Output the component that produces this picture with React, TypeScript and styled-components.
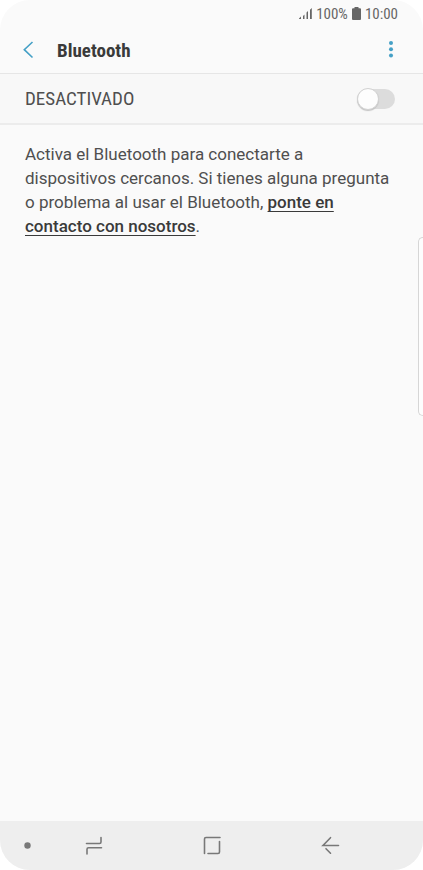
import React from "react";
import styled, { createGlobalStyle } from "styled-components";

const condensed = `"Roboto Condensed", Roboto, sans-serif`;

const Global = createGlobalStyle`
  *, *::before, *::after { box-sizing: border-box; }
  html, body, #root { height: 100%; }
  body { margin: 0; background: #fff; font-family: Roboto, sans-serif; }
`;

const Screen = styled.div`
  position: relative;
  display: flex;
  flex-direction: column;
  min-height: 100%;
  overflow: hidden;
  border-radius: 30px;
  background: #fafafa;
  color: #4f4f4f;
`;

const StatusBar = styled.div`
  display: flex;
  justify-content: flex-end;
  align-items: center;
  gap: 4px;
  height: 27px;
  padding: 0 25px;
  font-family: ${condensed};
  font-size: 15px;
  color: #666;
`;

const Header = styled.header`
  display: flex;
  align-items: center;
  height: 47px;
  padding: 0 20px 0 16px;
  border-bottom: 1px solid #e6e6e6;
`;

const IconButton = styled.button`
  display: flex;
  padding: 0;
  border: 0;
  background: none;
  color: #45a0c6;
  cursor: pointer;
`;

const Title = styled.h1`
  flex: 1;
  margin: 0 0 0 17px;
  font-family: ${condensed};
  font-size: 19px;
  font-weight: 700;
  color: #3a3a3a;
`;

const SwitchRow = styled.label`
  display: flex;
  align-items: center;
  justify-content: space-between;
  height: 51px;
  padding: 0 28px 0 25px;
  border-bottom: 2px solid #ececec;
  background: #f8f8f8;
  font-family: ${condensed};
  font-size: 19px;
`;

const Switch = styled.input`
  appearance: none;
  display: flex;
  align-items: center;
  width: 38px;
  height: 20px;
  margin: 0;
  border-radius: 10px;
  background: #dcdcdc;
  cursor: pointer;

  &::before {
    content: "";
    flex: none;
    width: 22px;
    height: 22px;
    border: 1px solid #d2d2d2;
    border-radius: 50%;
    background: #fdfdfd;
    box-shadow: 0 1px 1px #c4c4c4;
  }

  &:checked {
    justify-content: flex-end;
    background: #8cc4dc;
  }
`;

const Message = styled.p`
  flex: 1;
  margin: 0;
  padding: 17px 25px;
  font-size: 17px;
  line-height: 24px;
`;

const Link = styled.a`
  color: #3a3a3a;
  font-weight: 500;
  text-underline-offset: 3px;
  text-decoration-thickness: 1px;
`;

const EdgeHandle = styled.div`
  position: absolute;
  top: 237px;
  right: 0;
  width: 5px;
  height: 179px;
  border: 1px solid #d6d6d6;
  border-right: 0;
  border-radius: 5px 0 0 5px;
  background: #fdfdfd;
`;

const NavBar = styled.nav`
  display: grid;
  grid-template-columns: 35px repeat(3, 1fr);
  height: 49px;
  padding-right: 34px;
  background: #eee;
`;

const NavButton = styled.button<{ $inset?: number }>`
  display: flex;
  align-items: center;
  justify-content: center;
  padding: 0 0 0 ${(p) => p.$inset ?? 0}px;
  border: 0;
  background: none;
  color: #787878;
  cursor: pointer;
`;

const NavIcon = ({ d }: { d: string }) => (
  <svg width="24" height="25" viewBox="0 0 24 25" fill="none" stroke="currentColor" strokeWidth="1.6" strokeLinecap="round" aria-hidden="true">
    <path d={d} />
  </svg>
);

export default function App() {
  return (
    <>
      <Global />
      <Screen>
        <StatusBar>
          <svg width="13" height="13" viewBox="0 0 13 13" fill="currentColor" aria-hidden="true">
            <path d="M0 12h2V9.500L0 11.500zM4 12h1.500V7.500L4 9zM7.500 12H9V4L7.500 5.500zM11 12h1.800V1L11 2.800z" />
          </svg>
          <span>100%</span>
          <svg width="9" height="13" viewBox="0 0 9 13" fill="currentColor" aria-hidden="true">
            <path d="M2.5 0h4v1.2H8q1 0 1 1V12q0 1-1 1H1q-1 0-1-1V2.2q0-1 1-1h1.5z" />
          </svg>
          <span>10:00</span>
        </StatusBar>
        <Header>
          <IconButton aria-label="Atrás">
            <svg width="24" height="24" viewBox="0 0 24 24" fill="none" stroke="currentColor" strokeWidth="1.6" aria-hidden="true">
              <path d="M16.5 4 8.3 11.7l8.2 7.8" />
            </svg>
          </IconButton>
          <Title>Bluetooth</Title>
          <IconButton aria-label="Más opciones">
            <svg width="24" height="24" viewBox="0 0 24 24" fill="currentColor" aria-hidden="true">
              <circle cx="12" cy="5" r="2" />
              <circle cx="12" cy="11.2" r="2" />
              <circle cx="12" cy="17.4" r="2" />
            </svg>
          </IconButton>
        </Header>
        <SwitchRow>
          DESACTIVADO
          <Switch type="checkbox" role="switch" />
        </SwitchRow>
        <Message>
          Activa el Bluetooth para conectarte a dispositivos cercanos. Si tienes alguna pregunta o problema al usar el
          Bluetooth, <Link href="#contacto">ponte en contacto con nosotros</Link>.
        </Message>
        <EdgeHandle />
        <NavBar>
          <NavButton aria-label="Ocultar barra" $inset={19}>
            <svg width="7" height="7" viewBox="0 0 7 7" fill="currentColor" aria-hidden="true">
              <circle cx="3.5" cy="3.5" r="3.2" />
            </svg>
          </NavButton>
          <NavButton aria-label="Recientes">
            <NavIcon d="M4.5 10.5h13q1.5 0 1.5-1.5V4.5M5 21v-4.8q0-1.5 1.5-1.5h13" />
          </NavButton>
          <NavButton aria-label="Inicio">
            <NavIcon d="M4.5 20.5V6q0-1.5 1.5-1.5h14M19.5 8.5V19q0 1.5-1.5 1.5H8" />
          </NavButton>
          <NavButton aria-label="Volver">
            <NavIcon d="M20.5 12.5H5l7.5-7.8M8 15.7l4.5 4.5" />
          </NavButton>
        </NavBar>
      </Screen>
    </>
  );
}
